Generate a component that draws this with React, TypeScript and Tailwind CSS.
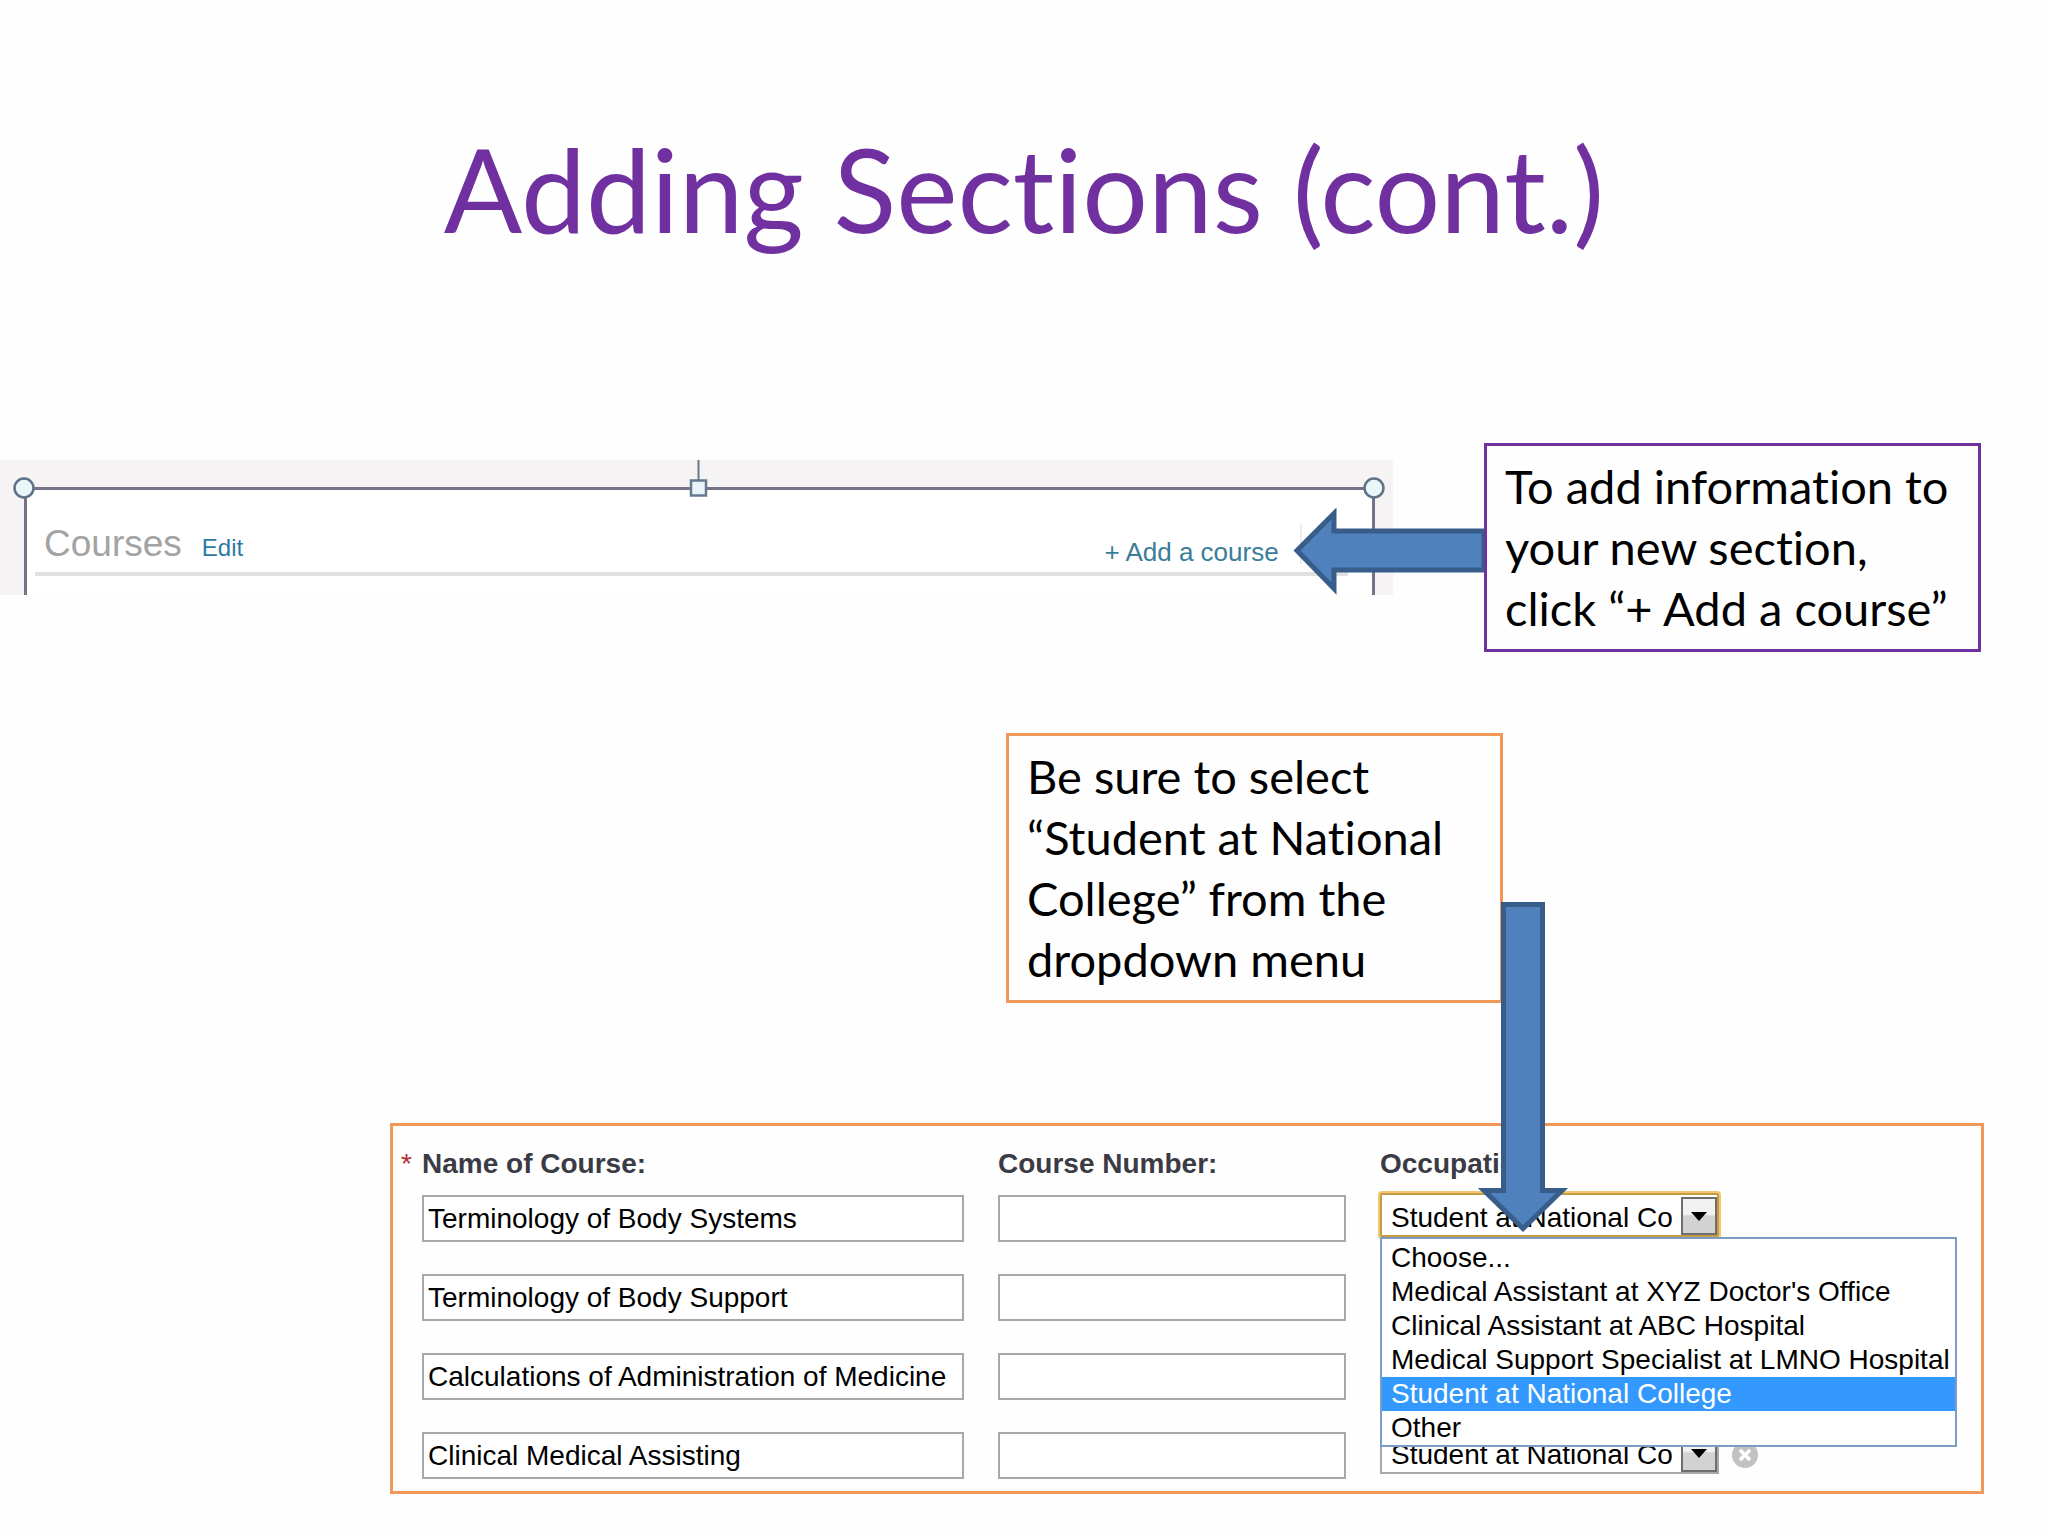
import type { ReactNode } from 'react'

const courses = [
  'Terminology of Body Systems',
  'Terminology of Body Support',
  'Calculations of Administration of Medicine',
  'Clinical Medical Assisting',
]

const occupations = [
  'Choose...',
  "Medical Assistant at XYZ Doctor's Office",
  'Clinical Assistant at ABC Hospital',
  'Medical Support Specialist at LMNO Hospital',
  'Student at National College',
  'Other',
]

const selected = 'Student at National College'

function Callout({ className, children }: { className: string; children: ReactNode }) {
  return (
    <p
      className={`relative w-[497px] border-3 py-[10px] pl-[18px] font-['Lato',sans-serif] text-[47px] leading-[61px] whitespace-nowrap text-black [font-variant-ligatures:none] ${className}`}
    >
      {children}
    </p>
  )
}

function CoursesStrip() {
  return (
    <div className="relative mt-[17px] h-[135px] w-[68%] shrink-0 bg-[#f5f3f3] pt-[27px] pr-[18px] pl-[24px]">
      <div className="h-full border-x-3 border-t-3 border-[#77728a] bg-white pt-[30px] pl-[8px]">
        <div className="mr-[24px] flex items-center justify-between border-b-4 border-[#e2dfdf] pb-[4px] font-['Liberation_Sans',Arial,sans-serif]">
          <div className="flex items-baseline gap-[20px] pl-[9px]">
            <h2 className="text-[37px] leading-[48px] text-[#a3a3a3]">Courses</h2>
            <a href="#edit" className="text-[24px] text-[#2a7aa6]">
              Edit
            </a>
          </div>
          <div className="mr-[46px] flex h-[40px] items-end border-r-2 border-[#ececf0] pr-[21px]">
            <a href="#add" className="text-[26px] leading-[24px] text-[#397d99]">
              + Add a course
            </a>
          </div>
        </div>
      </div>
      <svg className="absolute top-[16px] left-[12px]" width="24" height="24" viewBox="0 0 24 24">
        <circle cx="12" cy="12" r="9.5" fill="#eaf5f7" stroke="#5f7285" strokeWidth="2.5" />
      </svg>
      <svg className="absolute top-0 left-[686px]" width="24" height="40" viewBox="0 0 24 40">
        <path d="M12.5 0v20" stroke="#66788c" strokeWidth="2" />
        <rect x="5" y="20.500" width="15" height="15" fill="#e8f4fa" stroke="#66788c" strokeWidth="2.500" />
      </svg>
      <svg className="absolute top-[16px] right-[7px]" width="24" height="24" viewBox="0 0 24 24">
        <circle cx="12" cy="12" r="9.5" fill="#eaf5f7" stroke="#5f7285" strokeWidth="2.5" />
      </svg>
    </div>
  )
}

function OccupationSelect({ label, open }: { label: string; open?: boolean }) {
  return (
    <div className="relative flex h-[44px] items-center">
      <div className="relative h-full w-[339px]">
        <select
          aria-label={label}
          defaultValue={selected}
          className={`h-full w-full appearance-none border-2 bg-white pt-[2px] pr-[45px] pl-[9px] text-[28px] text-black ${
            open ? 'rounded-xs border-[#c79a45] ring-2 ring-[#f0c870]' : 'border-[#a8a8a8]'
          }`}
        >
          {occupations.map((name) => (
            <option key={name}>{name}</option>
          ))}
        </select>
        <span className="pointer-events-none absolute top-[4px] right-[2px] flex h-[38px] w-[36px] items-center justify-center border-2 border-[#6e6e6e] bg-linear-to-b from-[#f2f2f2] from-45% to-[#d2d2d2] to-50%">
          <svg width="16" height="9" viewBox="0 0 16 9">
            <path d="M0 0h16L8 9z" fill="#000" />
          </svg>
        </span>
      </div>
      {!open && (
        <button aria-label="Remove course" className="mt-[5px] ml-[13px]">
          <svg width="26" height="26" viewBox="0 0 26 26">
            <circle cx="13" cy="13" r="13" fill="#c2c2c2" />
            <path d="M8 8l10 10M18 8L8 18" stroke="#fff" strokeWidth="3.500" />
          </svg>
        </button>
      )}
      {open && (
        <ul
          role="listbox"
          aria-label="Occupation options"
          className="absolute top-full left-0 z-10 w-full border-2 border-[#7b9cc4] bg-white pt-[2px] text-[28px] leading-[34px] whitespace-nowrap text-black"
        >
          {occupations.map((name) => (
            <li
              key={name}
              role="option"
              aria-selected={name === selected}
              className={name === selected ? 'bg-[#3399ff] pl-[9px] text-white' : 'pl-[9px]'}
            >
              {name}
            </li>
          ))}
        </ul>
      )}
    </div>
  )
}

function CourseForm() {
  return (
    <form className="mt-[120px] mr-[64px] ml-[390px] grid grid-cols-[542fr_348fr_577fr] gap-x-[34px] border-3 border-[#f0975a] pt-[20px] pr-[24px] pb-[12px] pl-[29px] font-['Liberation_Sans',Arial,sans-serif] text-[28px]">
      <div className="flex min-w-0 flex-col">
        <h3 className="relative leading-[36px] font-bold text-[#3b3b45]">
          <span className="absolute right-full mr-[10px] font-normal text-[#b03030]">*</span>
          Name of Course:
        </h3>
        <div className="mt-[13px] flex flex-col gap-[32px]">
          {courses.map((course) => (
            <input
              key={course}
              aria-label="Name of Course"
              defaultValue={course}
              className="h-[47px] w-full border-2 border-[#a8a8ab] bg-white pl-[4px] text-black"
            />
          ))}
        </div>
      </div>
      <div className="flex min-w-0 flex-col">
        <h3 className="leading-[36px] font-bold text-[#3b3b45]">Course Number:</h3>
        <div className="mt-[13px] flex flex-col gap-[32px]">
          {courses.map((course) => (
            <input
              key={course}
              aria-label={`Course Number for ${course}`}
              className="h-[47px] w-full border-2 border-[#a8a8ab] bg-white pl-[4px] text-black"
            />
          ))}
        </div>
      </div>
      <div className="flex min-w-0 flex-col">
        <h3 className="leading-[36px] font-bold text-[#3b3b45]">Occupation:</h3>
        <div className="mt-[11px] flex flex-col gap-[35px]">
          {courses.map((course, i) => (
            <OccupationSelect key={course} label={`Occupation for ${course}`} open={i === 0} />
          ))}
        </div>
      </div>
    </form>
  )
}

export default function App() {
  return (
    <main className="min-h-screen bg-[#fefefe]">
      <h1 className="pt-[121px] text-center font-['Lato',sans-serif] text-[116px] leading-[136px] text-[#7030a0] [font-variant-ligatures:none]">
        Adding Sections (cont.)
      </h1>

      <section className="mt-[186px] flex items-start justify-between">
        <CoursesStrip />
        <div className="relative mr-[67px]">
          <svg className="absolute top-[60px] right-[494px]" width="196" height="96" viewBox="0 0 196 96">
            <path
              d="M6 47.500L43 10.500V28H193V67H43V85.500Z"
              fill="#4f81bd"
              stroke="#385d8a"
              strokeWidth="5"
            />
          </svg>
          <Callout className="border-[#7030a0]">
            To add information to
            <br />
            your new section,
            <br />
            click “+ Add a course”
          </Callout>
        </div>
      </section>

      <section className="mt-[81px] flex justify-end pr-[545px]">
        <div className="relative">
          <Callout className="border-[#f0975a]">
            Be sure to select
            <br />
            “Student at National
            <br />
            College” from the
            <br />
            dropdown menu
          </Callout>
          <svg
            className="absolute top-[166px] left-[470px] z-20"
            width="98"
            height="336"
            viewBox="0 0 98 336"
          >
            <path
              d="M27.500 5.500H66.500V291.500H86L47 329.500L8 291.500H27.500Z"
              fill="#4f81bd"
              stroke="#385d8a"
              strokeWidth="5"
            />
          </svg>
        </div>
      </section>

      <CourseForm />
    </main>
  )
}
